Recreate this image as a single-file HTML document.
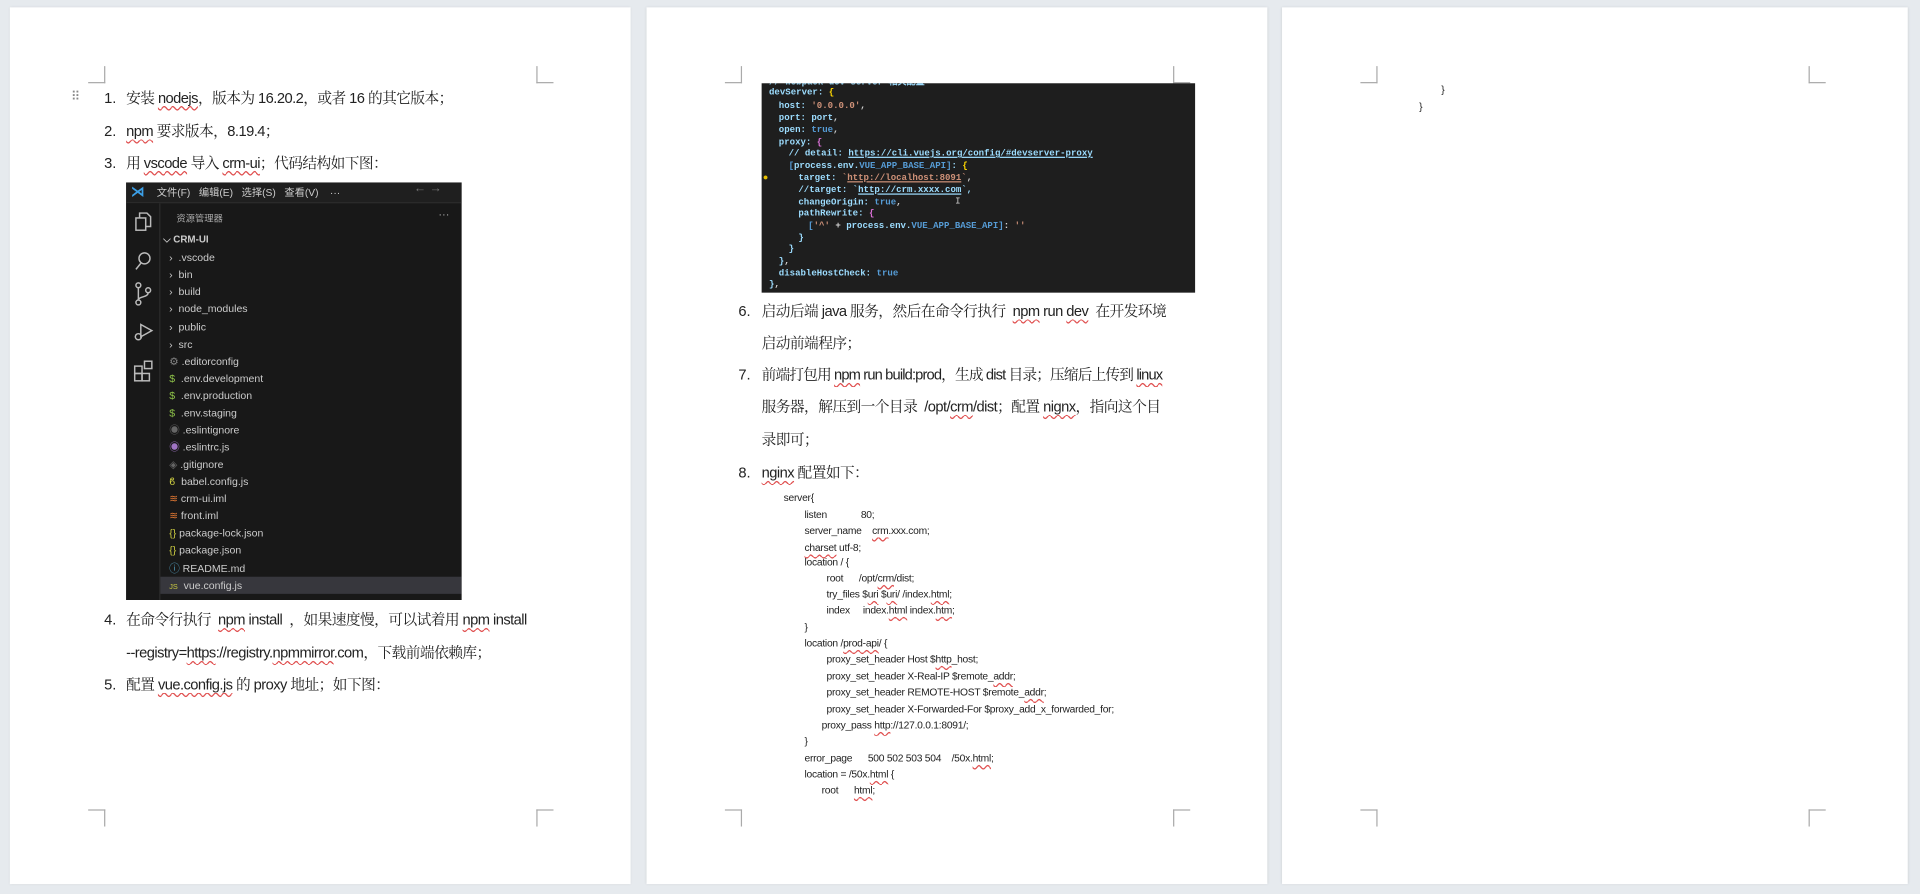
<!DOCTYPE html>
<html><head><meta charset="utf-8">
<style>
html,body{margin:0;padding:0;width:1920px;height:894px;overflow:hidden;background:#e6eaee;}
#w{position:absolute;left:0;top:0;width:1568px;height:730px;transform:scale(1.22449);transform-origin:0 0;font-family:"Liberation Sans","Noto Serif CJK SC","Noto Sans CJK SC",sans-serif;color:#222;}
.pg{position:absolute;top:6px;height:716px;background:#fff;box-shadow:0 0 2px #c8ccd0;}
.m{position:absolute;border-color:#aaa;border-style:solid;border-width:0;width:13px;height:13px;}
.t{position:absolute;white-space:nowrap;font-size:12px;line-height:14px;letter-spacing:-0.45px;}
.n{position:absolute;font-size:12px;line-height:14px;}
.u{text-decoration:underline wavy #e05050;text-decoration-thickness:0.6px;text-underline-offset:2px;}
.vs{position:absolute;left:103px;top:149px;width:274px;height:341px;background:#181818;overflow:hidden;font-family:"Liberation Sans","Noto Sans CJK SC",sans-serif;}
.vs .r{position:absolute;left:28px;right:0;height:14px;font-size:8.6px;line-height:14px;color:#ccc;white-space:nowrap;}
.code{position:absolute;left:622px;top:68px;width:354px;height:171px;background:#1e1e1e;overflow:hidden;font-family:"Liberation Mono",monospace;font-size:7.4px;font-weight:bold;}
.code div{position:absolute;white-space:pre;line-height:10px;color:#9cdcfe;}
.k{color:#9cdcfe}.s{color:#ce9178}.b{color:#569cd6}.c{color:#6a9955}.y{color:#ffd700}.p{color:#da70d6}.w{color:#d4d4d4}
.ng{position:absolute;white-space:pre;font-size:8.4px;line-height:10px;font-family:"Liberation Sans",sans-serif;color:#222;letter-spacing:-0.2px;}
</style></head><body><div id="w">
<div class="pg" style="left:8px;width:507px"></div>
<div class="pg" style="left:528px;width:507px"></div>
<div class="pg" style="left:1047px;width:511px"></div>

<div class="m" style="left:72px;top:54px;border-right-width:1px;border-bottom-width:1px"></div>
<div class="m" style="left:438px;top:54px;border-left-width:1px;border-bottom-width:1px"></div>
<div class="m" style="left:72px;top:661px;border-right-width:1px;border-top-width:1px"></div>
<div class="m" style="left:438px;top:661px;border-left-width:1px;border-top-width:1px"></div>
<div class="m" style="left:592px;top:54px;border-right-width:1px;border-bottom-width:1px"></div>
<div class="m" style="left:958px;top:54px;border-left-width:1px;border-bottom-width:1px"></div>
<div class="m" style="left:592px;top:661px;border-right-width:1px;border-top-width:1px"></div>
<div class="m" style="left:958px;top:661px;border-left-width:1px;border-top-width:1px"></div>
<div class="m" style="left:1111px;top:54px;border-right-width:1px;border-bottom-width:1px"></div>
<div class="m" style="left:1477px;top:54px;border-left-width:1px;border-bottom-width:1px"></div>
<div class="m" style="left:1111px;top:661px;border-right-width:1px;border-top-width:1px"></div>
<div class="m" style="left:1477px;top:661px;border-left-width:1px;border-top-width:1px"></div>

<div class="t" style="left:58px;top:73px;color:#888;font-size:10px">⠿</div>
<div class="n" style="left:85px;top:73px">1.</div>
<div class="t" style="left:103px;top:73px">安装 <span class="u">nodejs</span>，版本为 16.20.2，或者 16 的其它版本；</div>
<div class="n" style="left:85px;top:100px">2.</div>
<div class="t" style="left:103px;top:100px"><span class="u">npm</span> 要求版本，8.19.4；</div>
<div class="n" style="left:85px;top:126px">3.</div>
<div class="t" style="left:103px;top:126px">用 <span class="u">vscode</span> 导入 <span class="u">crm-ui</span>；代码结构如下图：</div>

<div class="vs">
 <div style="position:absolute;left:0;top:0;right:0;height:16px;background:#1f1f1f;border-bottom:1px solid #2b2b2b"></div>
 <div style="position:absolute;left:4px;top:1px;color:#3ca0e8;font-size:11px;font-weight:bold">⋊</div>
 <div style="position:absolute;left:25px;top:2px;font-size:8.4px;color:#ccc;white-space:pre">文件(F)   编辑(E)   选择(S)   查看(V)    ···</div>
 <div style="position:absolute;left:235px;top:0px;font-size:10px;color:#777">←  →</div>
 <div style="position:absolute;left:0;top:17px;width:27px;bottom:0;background:#181818;border-right:1px solid #2b2b2b"></div>
 <svg style="position:absolute;left:5px;top:22px" width="18" height="150" viewBox="0 0 18 150" fill="none" stroke="#bbb" stroke-width="1.2">
  <rect x="3" y="7" width="8" height="10"/><path d="M6 7V3h6l3 3v8h-4"/>
  <circle cx="10" cy="40" r="4.5"/><path d="M7 44l-4 5"/>
  <circle cx="5" cy="62" r="2"/><circle cx="5" cy="76" r="2"/><circle cx="13" cy="66" r="2"/><path d="M5 64v10M13 68c0 4-8 3-8 6"/>
  <path d="M7 94l9 5-9 5z"/><circle cx="5" cy="104" r="2.5"/>
  <rect x="2" y="128" width="6" height="6"/><rect x="2" y="134" width="6" height="6"/><rect x="8" y="134" width="6" height="6"/><rect x="10" y="124" width="6" height="6"/>
 </svg>
 <div style="position:absolute;left:41px;top:24px;font-size:7.6px;color:#aaa">资源管理器</div>
 <div style="position:absolute;right:10px;top:21px;font-size:9px;color:#aaa">···</div>
 <div class="r" style="top:40px;font-weight:bold;font-size:8px">&nbsp;⌵ CRM-UI</div>
 <div class="r" style="top:54px">&nbsp;&nbsp;&nbsp;›&nbsp;&nbsp;.vscode</div>
 <div class="r" style="top:68px">&nbsp;&nbsp;&nbsp;›&nbsp;&nbsp;bin</div>
 <div class="r" style="top:82px">&nbsp;&nbsp;&nbsp;›&nbsp;&nbsp;build</div>
 <div class="r" style="top:96px">&nbsp;&nbsp;&nbsp;›&nbsp;&nbsp;node_modules</div>
 <div class="r" style="top:111px">&nbsp;&nbsp;&nbsp;›&nbsp;&nbsp;public</div>
 <div class="r" style="top:125px">&nbsp;&nbsp;&nbsp;›&nbsp;&nbsp;src</div>
 <div class="r" style="top:139px">&nbsp;&nbsp;&nbsp;<span style="color:#888">⚙</span> .editorconfig</div>
 <div class="r" style="top:153px">&nbsp;&nbsp;&nbsp;<span style="color:#8dc149">$</span>&nbsp;&nbsp;.env.development</div>
 <div class="r" style="top:167px">&nbsp;&nbsp;&nbsp;<span style="color:#8dc149">$</span>&nbsp;&nbsp;.env.production</div>
 <div class="r" style="top:181px">&nbsp;&nbsp;&nbsp;<span style="color:#8dc149">$</span>&nbsp;&nbsp;.env.staging</div>
 <div class="r" style="top:195px">&nbsp;&nbsp;&nbsp;<span style="color:#666">◉</span> .eslintignore</div>
 <div class="r" style="top:209px">&nbsp;&nbsp;&nbsp;<span style="color:#a074c4">◉</span> .eslintrc.js</div>
 <div class="r" style="top:223px">&nbsp;&nbsp;&nbsp;<span style="color:#666">◈</span> .gitignore</div>
 <div class="r" style="top:237px">&nbsp;&nbsp;&nbsp;<span style="color:#cbcb41">ϐ</span>&nbsp;&nbsp;babel.config.js</div>
 <div class="r" style="top:251px">&nbsp;&nbsp;&nbsp;<span style="color:#e37933">≋</span>&nbsp;crm-ui.iml</div>
 <div class="r" style="top:265px">&nbsp;&nbsp;&nbsp;<span style="color:#e37933">≋</span>&nbsp;front.iml</div>
 <div class="r" style="top:279px">&nbsp;&nbsp;&nbsp;<span style="color:#cbcb41">{}</span> package-lock.json</div>
 <div class="r" style="top:293px">&nbsp;&nbsp;&nbsp;<span style="color:#cbcb41">{}</span> package.json</div>
 <div class="r" style="top:308px">&nbsp;&nbsp;&nbsp;<span style="color:#519aba">ⓘ</span>&nbsp;README.md</div>
 <div class="r" style="top:322px;background:#37373d">&nbsp;&nbsp;&nbsp;<span style="color:#cbcb41;font-size:6px">JS</span>&nbsp;&nbsp;vue.config.js</div>
</div>

<div class="n" style="left:85px;top:499px">4.</div>
<div class="t" style="left:103px;top:499px">在命令行执行&nbsp; <span class="u">npm</span> install&nbsp; ，如果速度慢，可以试着用 <span class="u">npm</span> install</div>
<div class="t" style="left:103px;top:526px">--registry=<span class="u">https</span>://registry.<span class="u">npmmirror</span>.com，下载前端依赖库；</div>
<div class="n" style="left:85px;top:552px">5.</div>
<div class="t" style="left:103px;top:552px">配置 <span class="u">vue.config.js</span> 的 proxy 地址；如下图：</div>

<div class="code">
 <div style="left:6px;top:-5px" class="c">// webpack-dev-server 相关配置</div>
 <div style="left:6px;top:3px">devServer: <span class="y">{</span></div>
 <div style="left:14px;top:14px">host: <span class="s">'0.0.0.0'</span><span class="w">,</span></div>
 <div style="left:14px;top:24px">port: <span class="k">port</span><span class="w">,</span></div>
 <div style="left:14px;top:34px">open: <span class="b">true</span><span class="w">,</span></div>
 <div style="left:14px;top:44px">proxy: <span class="p">{</span></div>
 <div style="left:22px;top:53px" class="c">// detail: <u>https://cli.vuejs.org/config/#devserver-proxy</u></div>
 <div style="left:22px;top:63px"><span class="b">[</span>process.env.<span class="b">VUE_APP_BASE_API</span><span class="b">]</span>: <span class="y">{</span></div>
 <div style="left:30px;top:73px">target: <span class="s">`<u>http://localhost:8091</u>`</span><span class="w">,</span></div>
 <div style="left:30px;top:83px" class="c">//target: `<u>http://crm.xxxx.com</u>`,</div>
 <div style="left:30px;top:93px">changeOrigin: <span class="b">true</span><span class="w">,</span></div>
 <div style="left:30px;top:102px">pathRewrite: <span class="p">{</span></div>
 <div style="left:38px;top:112px"><span class="b">[</span><span class="s">'^'</span> <span class="w">+</span> process.env.<span class="b">VUE_APP_BASE_API</span><span class="b">]</span><span class="w">:</span> <span class="s">''</span></div>
 <div style="left:30px;top:122px" class="p">}</div>
 <div style="left:22px;top:131px" class="y">}</div>
 <div style="left:14px;top:141px" class="p">}<span class="w">,</span></div>
 <div style="left:14px;top:151px">disableHostCheck: <span class="b">true</span></div>
 <div style="left:6px;top:160px" class="y">}<span class="w">,</span></div>
 <div style="left:1px;top:73px;color:#e8c000">●</div>
 <div style="left:158px;top:92px;color:#ccc;font-weight:normal">I</div>
</div>

<div class="n" style="left:603px;top:247px">6.</div>
<div class="t" style="left:622px;top:247px">启动后端 java 服务，然后在命令行执行&nbsp; <span class="u">npm</span> run <span class="u">dev</span>&nbsp; 在开发环境</div>
<div class="t" style="left:622px;top:273px">启动前端程序；</div>
<div class="n" style="left:603px;top:299px">7.</div>
<div class="t" style="left:622px;top:299px;letter-spacing:-0.7px">前端打包用 <span class="u">npm</span> run build:prod，生成 dist 目录；压缩后上传到 <span class="u">linux</span></div>
<div class="t" style="left:622px;top:325px">服务器，解压到一个目录&nbsp; /opt/<span class="u">crm</span>/dist；配置 <span class="u">nignx</span>，指向这个目</div>
<div class="t" style="left:622px;top:352px">录即可；</div>
<div class="n" style="left:603px;top:379px">8.</div>
<div class="t" style="left:622px;top:379px"><span class="u">nginx</span> 配置如下：</div>

<div class="ng" style="left:640px;top:401px">server{</div>
<div class="ng" style="left:657px;top:415px">listen             80;</div>
<div class="ng" style="left:657px;top:428px">server_name    <span class="u">crm</span>.xxx.com;</div>
<div class="ng" style="left:657px;top:442px"><span class="u">charset</span> utf-8;</div>
<div class="ng" style="left:657px;top:454px">location / {</div>
<div class="ng" style="left:675px;top:467px">root      /opt/<span class="u">crm</span>/dist;</div>
<div class="ng" style="left:675px;top:480px">try_files $<span class="u">uri</span> $<span class="u">uri</span>/ /index.<span class="u">html</span>;</div>
<div class="ng" style="left:675px;top:493px">index     index.<span class="u">html</span> index.<span class="u">htm</span>;</div>
<div class="ng" style="left:657px;top:507px">}</div>
<div class="ng" style="left:657px;top:520px">location /<span class="u">prod-api</span>/ {</div>
<div class="ng" style="left:675px;top:533px">proxy_set_header Host $<span class="u">http</span>_host;</div>
<div class="ng" style="left:675px;top:547px">proxy_set_header X-Real-IP $remote_<span class="u">addr</span>;</div>
<div class="ng" style="left:675px;top:560px">proxy_set_header REMOTE-HOST $remote_<span class="u">addr</span>;</div>
<div class="ng" style="left:675px;top:574px">proxy_set_header X-Forwarded-For $proxy_add_x_forwarded_for;</div>
<div class="ng" style="left:671px;top:587px">proxy_pass <span class="u">http</span>://127.0.0.1:8091/;</div>
<div class="ng" style="left:657px;top:600px">}</div>
<div class="ng" style="left:657px;top:614px">error_page      500 502 503 504    /50x.<span class="u">html</span>;</div>
<div class="ng" style="left:657px;top:627px">location = /50x.<span class="u">html</span> {</div>
<div class="ng" style="left:671px;top:640px">root      <span class="u">html</span>;</div>

<div class="ng" style="left:1177px;top:68px">}</div>
<div class="ng" style="left:1159px;top:82px">}</div>
</div></body></html>
